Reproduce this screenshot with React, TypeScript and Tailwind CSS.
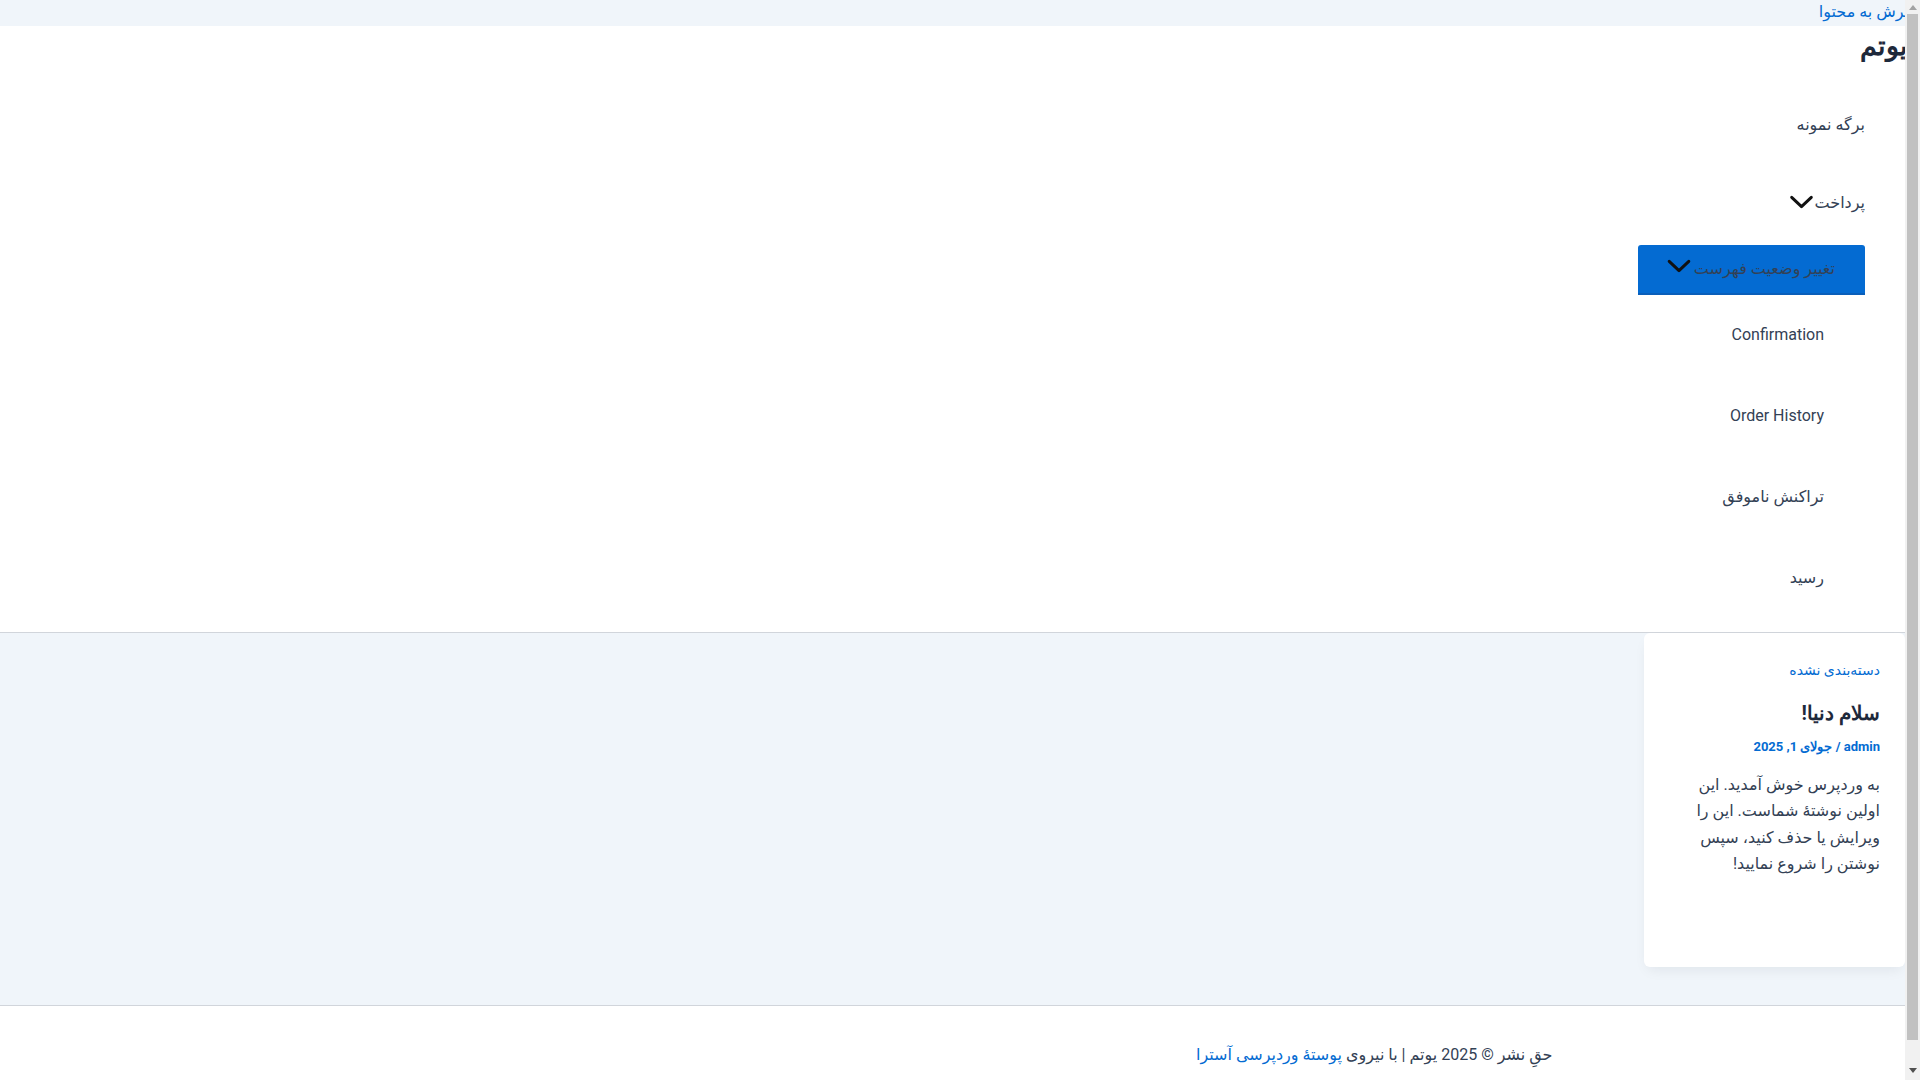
import React from "react";

const subItems = ["Confirmation", "Order History", "تراکنش ناموفق", "رسید"];

function Chevron({ className = "" }: { className?: string }) {
  return (
    <svg viewBox="0 0 26 15" className={className} fill="none" stroke="#111" strokeWidth="3.2" strokeLinecap="round" strokeLinejoin="round">
      <path d="M2.5 2.5 L13 12.5 L23.5 2.5" />
    </svg>
  );
}

// classic window scrollbar on the right edge
function ScrollBar() {
  return (
    <div className="fixed right-0 top-0 flex h-screen w-[15px] flex-col items-center bg-[#f1f1f1]">
      <svg viewBox="0 0 8 5" className="mt-[5px] h-[5px] w-[8px]">
        <path d="M0 5 L4 0 L8 5 Z" fill="#a3a3a3" />
      </svg>
      <div className="mt-[4px] h-[1026px] w-[11px] bg-[#c1c1c1]" />
      <svg viewBox="0 0 8 5" className="mt-[28px] h-[5px] w-[8px]">
        <path d="M0 0 L4 5 L8 0 Z" fill="#505050" />
      </svg>
    </div>
  );
}

export default function App() {
  return (
    <div dir="rtl" className="min-h-[1117px] bg-white pr-[15px] font-[Roboto,'DejaVu_Sans',sans-serif] text-[16px] text-[#334155]">
      {/* skip link strip */}
      <div className="flex h-[26px] items-start bg-[#f0f5fa]">
        <a href="#content" className="-mr-[4px] text-[16px] leading-[24px] text-[#046bd2]">پرش به محتوا</a>
      </div>

      <header className="border-b border-[#d1d5db] pb-[14px]">
        <div className="flex h-[46px] items-center pb-[5px]">
          <span className="-mr-[3px] font-[Roboto,sans-serif] text-[27px] font-bold leading-none text-[#1e293b]">یوتم</span>
        </div>

        <nav className="mt-[13px] flex flex-col items-start pr-[40px]">
          <a className="flex h-[80px] items-center">برگه نمونه</a>
          <a className="flex h-[76px] items-center gap-[1px]">
            <span>پرداخت</span>
            <Chevron className="mb-[3px] h-[14px] w-[25px]" />
          </a>
          <button className="mt-[4px] flex h-[50px] w-[227px] items-center justify-start gap-[2px] rounded-t-[3px] border-b-[2px] border-[#0a5fba] bg-[#046bd2] pr-[30px] text-[16px] text-[#334155]">
            <span>تغییر وضعیت فهرست</span>
            <Chevron className="mb-[6px] h-[14px] w-[26px]" />
          </button>
          <div className="flex flex-col pr-[41px]">
            {subItems.map((item) => (
              <a key={item} className="flex h-[81px] items-center first:h-[80px]">{item}</a>
            ))}
          </div>
        </nav>
      </header>

      <main id="content" className="bg-[#f0f5fa] pb-[38px]">
        <article className="h-[334px] w-[261px] rounded-md bg-white pl-[25px] pr-[25px] pt-[27px] shadow-[0_6px_14px_-4px_rgba(15,23,42,0.08)]">
          <a className="block text-[14px] leading-[20px] text-[#046bd2]">دسته‌بندی نشده</a>
          <h2 className="mt-[19px] font-[Roboto,sans-serif] text-[20px] font-bold leading-[28px] text-[#1e293b]">سلام دنیا!</h2>
          <div className="mt-[10px] font-[Roboto,sans-serif] text-[13px] font-bold leading-[20px] text-[#046bd2]">
            admin / جولای 1, 2025
          </div>
          <p className="mt-[15px] text-[16px] leading-[26.4px] text-[#334155]">
            به وردپرس خوش آمدید. این اولین نوشتهٔ شماست. این را ویرایش یا حذف کنید، سپس نوشتن را شروع نمایید!
          </p>
        </article>
      </main>

      <footer className="border-t border-[#d1d5db] bg-white pb-[50px] pt-[37px]">
        <div className="mx-auto max-w-[1240px] px-[20px] leading-[24px]">
          حقِ نشر © 2025 یوتم | با نیروی <a className="text-[#046bd2]">پوستهٔ وردپرسی آسترا</a>
        </div>
      </footer>

      <ScrollBar />
    </div>
  );
}
